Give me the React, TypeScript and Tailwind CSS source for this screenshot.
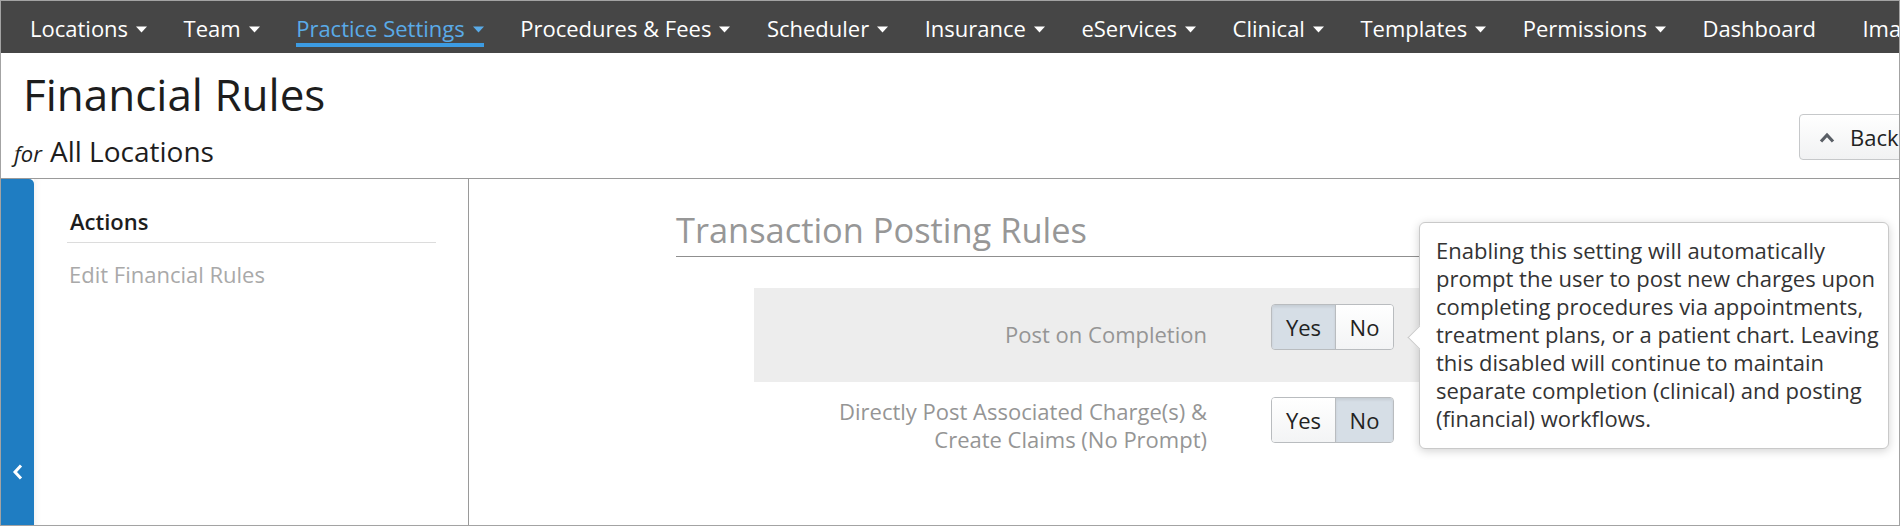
import React from "react";

const navItems = [
  { label: "Locations", caret: true },
  { label: "Team", caret: true },
  { label: "Practice Settings", caret: true, active: true },
  { label: "Procedures & Fees", caret: true },
  { label: "Scheduler", caret: true },
  { label: "Insurance", caret: true },
  { label: "eServices", caret: true },
  { label: "Clinical", caret: true },
  { label: "Templates", caret: true },
  { label: "Permissions", caret: true },
  { label: "Dashboard", caret: false, extra: true },
  { label: "Imaging", caret: false },
];

const tipLines = [
  "Enabling this setting will automatically",
  "prompt the user to post new charges upon",
  "completing procedures via appointments,",
  "treatment plans, or a patient chart. Leaving",
  "this disabled will continue to maintain",
  "separate completion (clinical) and posting",
  "(financial) workflows.",
];

function Caret() {
  return (
    <svg width="11" height="7" viewBox="0 0 11 7" className="ml-[8px] mt-[3px] shrink-0">
      <path d="M0 0.5 L11 0.5 L5.5 6.5 Z" fill="currentColor" />
    </svg>
  );
}

function YesNo({ value }: { value: "yes" | "no" }) {
  const on = "bg-[#d6dee6] shadow-[inset_0_2px_3px_rgba(0,0,0,0.08)]";
  const off = "bg-gradient-to-b from-white to-[#f3f4f5]";
  return (
    <div className="flex h-[46px] w-[123px] rounded-[4px] border border-[#b9bcbf] overflow-hidden text-[22px] text-[#222]">
      <div className={`w-[64px] flex items-center justify-center border-r border-[#b9bcbf] ${value === "yes" ? on : off}`}>
        Yes
      </div>
      <div className={`flex-1 flex items-center justify-center ${value === "no" ? on : off}`}>No</div>
    </div>
  );
}

export default function App() {
  return (
    <div
      className="w-[1900px] h-[526px] flex flex-col overflow-hidden border border-[#a3a3a3] bg-white"
      style={{ fontFamily: '"Open Sans", "Liberation Sans", sans-serif' }}
    >
      {/* top nav */}
      <div className="h-[52px] shrink-0 bg-[#464646] flex items-start pl-[29px] gap-[36.5px] whitespace-nowrap">
        {navItems.map((item) => (
          <div
            key={item.label}
            className={`h-[46px] pt-[12px] flex items-center border-b-4 text-[22px] ${
              item.active ? "border-[#3c9be2] text-[#5aabe8]" : "border-transparent text-white"
            } ${item.extra ? "mr-[10px]" : ""}`}
          >
            <span>{item.label}</span>
            {item.caret && <Caret />}
          </div>
        ))}
      </div>

      {/* page header */}
      <div className="h-[126px] shrink-0 border-b border-[#9a9a9a] flex">
        <div className="flex-1 pl-[13px] pt-[15px]">
          <h1 className="pl-[9px] text-[44px] leading-[52px] text-[#1d1d1d]">Financial Rules</h1>
          <div className="mt-[14px] flex items-baseline text-[#1d1d1d]">
            <span className="italic text-[22px] leading-[34px]">for</span>
            <span className="ml-[8px] text-[28px] leading-[34px]">All Locations</span>
          </div>
        </div>
        <button className="self-end mb-[18px] -mr-[20px] w-[120px] h-[46px] shrink-0 rounded-[4px] border border-[#c6c8ca] bg-gradient-to-b from-white to-[#f1f2f3] flex items-center pl-[19px] text-[22px] text-[#222]">
          <svg width="16" height="11" viewBox="0 0 16 11" className="mr-[15px]">
            <polyline points="2,9.5 8,3 14,9.5" fill="none" stroke="#5a5f66" strokeWidth="3.2" />
          </svg>
          Back
        </button>
      </div>

      {/* body */}
      <div className="flex-1 flex min-h-0">
        <div className="w-[33px] shrink-0 bg-[#1f7dc2] rounded-tr-[5px] flex flex-col justify-end items-center pb-[45px]">
          <svg width="11" height="16" viewBox="0 0 11 16">
            <polyline points="9,1.5 3,8 9,14.5" fill="none" stroke="white" strokeWidth="3" />
          </svg>
        </div>

        <div className="w-[435px] shrink-0 border-r border-[#9a9a9a] pl-[33px] pr-[32px] pt-[27px] shadow-[inset_6px_0_6px_-4px_rgba(0,0,0,0.06)]">
          <div className="pl-[3px] pb-[6px] border-b border-[#dcdcdc] text-[22px] leading-[30px] font-semibold text-[#1d1d1d]">
            Actions
          </div>
          <div className="mt-[16px] pl-[2px] text-[22px] leading-[30px] text-[#a9a9a9]">Edit Financial Rules</div>
        </div>

        <div className="flex-1 pl-[207px] pt-[31px]">
          <div className="w-[1015px]">
            <h2 className="text-[34.4px] leading-[40px] text-[#979797] pb-[6px] border-b border-[#8f8f8f]">
              Transaction Posting Rules
            </h2>

            <div className="mt-[31px] ml-[78px] h-[94px] bg-[#ededed] flex items-start">
              <div className="w-[453px] mt-[32px] text-right text-[22px] leading-[28px] text-[#959595]">
                Post on Completion
              </div>
              <div className="relative ml-[64px] mt-[16px]">
                <YesNo value="yes" />
                {/* tooltip */}
                <div className="absolute left-[148px] top-[-82px] w-[470px] h-[227px] bg-white border border-[#c9c9c9] rounded-[6px] shadow-[0_2px_10px_rgba(0,0,0,0.18)] pl-[16px] pt-[13px] text-[22px] leading-[28px] text-[#333] whitespace-nowrap z-10">
                  <div className="absolute left-[-9px] top-[106px] w-[17px] h-[17px] rotate-45 bg-white border-l border-b border-[#c9c9c9]" />
                  {tipLines.map((l) => (
                    <div key={l} className="relative">
                      {l}
                    </div>
                  ))}
                </div>
              </div>
            </div>

            <div className="ml-[78px] pt-[15px] flex items-start">
              <div className="w-[453px] text-right text-[22px] leading-[28px] text-[#959595]">
                Directly Post Associated Charge(s) &amp;
                <br />
                Create Claims (No Prompt)
              </div>
              <div className="ml-[64px]">
                <YesNo value="no" />
              </div>
            </div>
          </div>
        </div>
      </div>
    </div>
  );
}
